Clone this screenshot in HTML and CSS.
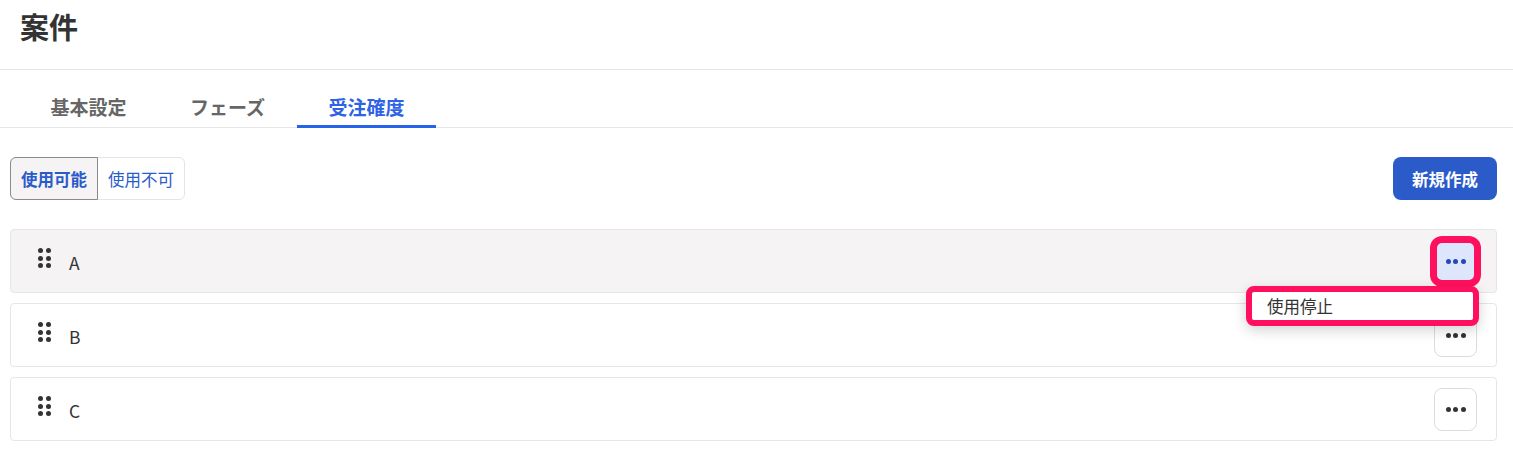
FILE: index.html
```html
<!DOCTYPE html>
<html lang="ja">

<head>
  <meta charset="UTF-8">
  <meta name="viewport" content="width=device-width, initial-scale=1.0">
  <title>案件 - 受注確度</title>
  <link rel="stylesheet" href="styles.css">
</head>

<body>
  <header class="page-header">
    <h1>案件</h1>
  </header>

  <nav class="tabs">
    <a class="tab">基本設定</a>
    <a class="tab">フェーズ</a>
    <a class="tab active">受注確度</a>
  </nav>

  <main class="content">
    <div class="toolbar">
      <div class="segment">
        <button class="seg-btn selected">使用可能</button>
        <button class="seg-btn">使用不可</button>
      </div>
      <button class="primary">新規作成</button>
    </div>

    <ul class="list">
      <li class="row hovered">
        <span class="handle"><i></i><i></i><i></i><i></i><i></i><i></i></span>
        <span class="label">A</span>
        <div class="more-wrap">
          <button class="more open"><i></i><i></i><i></i></button>
          <div class="menu">
            <div class="menu-item">使用停止</div>
          </div>
        </div>
      </li>
      <li class="row">
        <span class="handle"><i></i><i></i><i></i><i></i><i></i><i></i></span>
        <span class="label">B</span>
        <div class="more-wrap">
          <button class="more"><i></i><i></i><i></i></button>
        </div>
      </li>
      <li class="row">
        <span class="handle"><i></i><i></i><i></i><i></i><i></i><i></i></span>
        <span class="label">C</span>
        <div class="more-wrap">
          <button class="more"><i></i><i></i><i></i></button>
        </div>
      </li>
    </ul>
  </main>
</body>

</html>
```

FILE: styles.css
```css
body {
  margin: 0;
  font-family: "Noto Sans CJK JP", "Noto Sans", sans-serif;
  color: #333;
  background: #fff;
}

.page-header {
  height: 69px;
  padding: 0 20px;
  border-bottom: 1px solid #e6e6e6;
}

.page-header h1 {
  margin: 0;
  font-size: 29px;
  line-height: 52px;
  font-weight: bold;
  color: #333;
}

.tabs {
  display: flex;
  padding-left: 19px;
  border-bottom: 1px solid #e6e6e6;
}

.tab {
  width: 139px;
  text-align: center;
  padding: 26px 0 7px;
  font-size: 19px;
  line-height: 22px;
  font-weight: bold;
  color: #666;
  border-bottom: 3px solid transparent;
  margin-bottom: -1px;
}

.tab.active {
  color: #2f63e6;
  border-bottom-color: #2563eb;
}

.content {
  padding: 29px 16px 0 10px;
}

.toolbar {
  display: flex;
  justify-content: space-between;
  align-items: center;
}

.segment {
  display: flex;
  border: 1px solid #e4e4e4;
  border-radius: 6px;
  height: 43px;
  box-sizing: border-box;
}

.seg-btn {
  font-family: inherit;
  font-size: 16.5px;
  color: #2a5bc8;
  background: #fff;
  border: none;
  padding: 0 10px;
  border-radius: 0 6px 6px 0;
}

.seg-btn.selected {
  font-weight: bold;
  background: #f5f3f4;
  border: 1px solid #8a8a8a;
  margin: -1px 0 -1px -1px;
  border-radius: 6px 0 0 6px;
}

.primary {
  font-family: inherit;
  font-size: 16.5px;
  font-weight: bold;
  color: #fff;
  background: #2a5bc9;
  border: none;
  border-radius: 8px;
  height: 43px;
  padding: 0 19px;
}

.list {
  list-style: none;
  margin: 29px 0 0;
  padding: 0;
  display: flex;
  flex-direction: column;
  gap: 10px;
}

.row {
  display: flex;
  align-items: center;
  height: 64px;
  box-sizing: border-box;
  padding: 0 19px 0 27px;
  border: 1px solid #e6e6e6;
  border-radius: 4px;
  background: #fff;
}

.row.hovered {
  background: #f5f3f4;
}

.handle {
  display: grid;
  grid-template-columns: 5px 5px;
  gap: 2.5px 3px;
  margin-bottom: 6px;
}

.handle i,
.more i {
  display: block;
  width: 5px;
  height: 5px;
  border-radius: 50%;
  background: #333;
}

.label {
  margin-left: 18px;
  margin-top: 3px;
  font-size: 17.5px;
  flex: 1;
}

.more-wrap {
  position: relative;
}

.more {
  width: 43px;
  height: 43px;
  box-sizing: border-box;
  display: flex;
  justify-content: center;
  align-items: center;
  gap: 2.5px;
  background: #fff;
  border: 1px solid #dcdcdc;
  border-radius: 8px;
  padding: 0;
}

.more.open {
  background: #dde6fb;
  border: 3px solid #ff105e;
  box-shadow: 0 0 0 4px #ff105e;
}

.more.open i {
  background: #2547b8;
}

.menu {
  position: absolute;
  top: 46px;
  right: -2px;
  width: 233px;
  box-sizing: border-box;
  border: 6px solid #ff105e;
  border-radius: 8px;
  background: #fff;
  box-shadow: 0 4px 14px rgba(0, 0, 0, 0.18);
  z-index: 2;
}

.menu-item {
  padding: 0 15px;
  font-size: 16.5px;
  line-height: 28px;
  color: #333;
}
```
